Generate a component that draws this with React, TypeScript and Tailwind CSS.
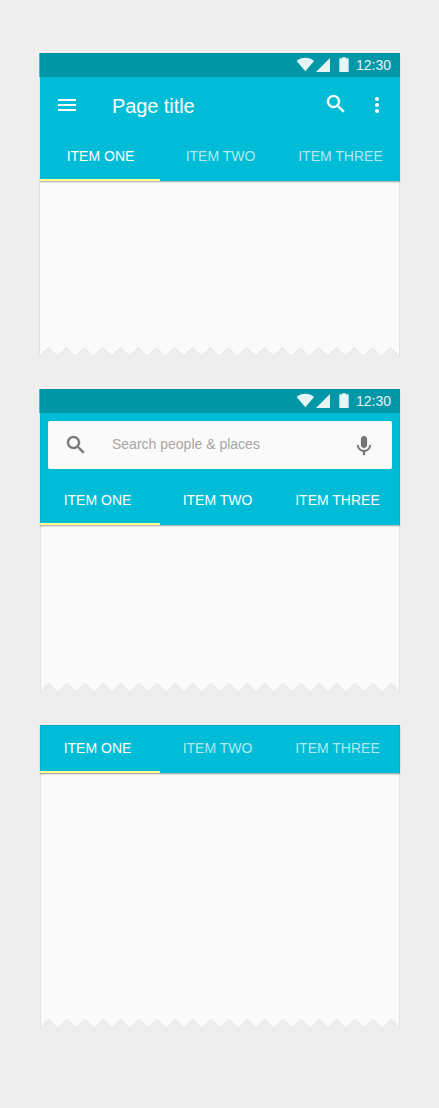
import type { ReactNode } from "react";

function Icon({ d, className, weight = 0 }: { d: string; className: string; weight?: number }) {
  return (
    <svg
      viewBox="0 0 24 24"
      className={`size-6 shrink-0 ${className}`}
      fill="currentColor"
      stroke="currentColor"
      strokeWidth={weight}
    >
      <path d={d} />
    </svg>
  );
}

const MENU = "M3 18h18v-2H3v2zm0-5h18v-2H3v2zm0-7v2h18V6H3z";
const SEARCH =
  "M15.5 14h-.79l-.28-.27C15.41 12.59 16 11.11 16 9.5 16 5.91 13.09 3 9.5 3S3 5.91 3 9.5 5.91 16 9.5 16c1.61 0 3.09-.59 4.23-1.57l.27.28v.79l5 4.99L20.49 19l-4.99-5zm-6 0C7.01 14 5 11.99 5 9.5S7.01 5 9.5 5 14 7.01 14 9.5 11.99 14 9.5 14z";
const MORE =
  "M12 8c1.1 0 2-.9 2-2s-.9-2-2-2-2 .9-2 2 .9 2 2 2zm0 2c-1.1 0-2 .9-2 2s.9 2 2 2 2-.9 2-2-.9-2-2-2zm0 6c-1.1 0-2 .9-2 2s.9 2 2 2 2-.9 2-2-.9-2-2-2z";
const MIC =
  "M12 14c1.66 0 2.99-1.34 2.99-3L15 5c0-1.66-1.34-3-3-3S9 3.34 9 5v6c0 1.66 1.34 3 3 3zm5.3-3c0 3-2.54 5.1-5.3 5.1S6.7 14 6.7 11H5c0 3.41 2.72 6.23 6 6.72V21h2v-3.28c3.28-.48 6-3.3 6-6.72h-1.7z";

function StatusBar() {
  return (
    <div className="-ml-px flex h-6 items-center justify-end bg-[#0097a7] pr-[9px] text-white/90 shadow-[inset_1px_0_0_rgba(255,255,255,0.3)]">
      <svg viewBox="0 0 54 16" className="mr-1.5 h-4 w-[54px]" fill="currentColor">
        <path d="M.7 3.9C3 1.9 6 .8 9.3.8S15.700 1.900 18 3.900L9.300 14.200z" />
        <path d="M34 1v14H20z" />
        <path d="M43.900 1.300H46V.3h4v1h2.100c.4 0 .6.200.6.600v12.500c0 .4-.2.600-.6.600h-8.200c-.4 0-.6-.2-.6-.6V1.900c0-.4.200-.6.600-.6z" />
      </svg>
      <span className="text-sm leading-6">12:30</span>
    </div>
  );
}

function Tabs({ muted = false, shifted = false }: { muted?: boolean; shifted?: boolean }) {
  return (
    <div className="grid h-12 grid-cols-3 text-center text-sm leading-[46px]">
      {["ITEM ONE", "ITEM TWO", "ITEM THREE"].map((label, i) => (
        <div
          key={label}
          className={`whitespace-nowrap ${shifted ? "pr-[5px]" : "pl-px"} ${
            i === 0 ? "border-b-2 border-[#ffff8d]" : muted ? "text-white/70" : ""
          }`}
        >
          {label}
        </div>
      ))}
    </div>
  );
}

function TornEdge({ right }: { right: number }) {
  const teeth = Array.from({ length: 20 }, (_, i) => {
    const tip = right - (i + 1) * 18;
    return `L${tip + 9} 1.5L${tip} 10.5`;
  }).join("");
  return (
    <svg viewBox="0 0 360 11" className="block h-[11px] w-[360px] overflow-visible">
      <path d={`M${right - 360} 0H${right}V10.5${teeth}Z`} fill="#fafafa" />
      <path d={`M${right} 10.5${teeth}`} fill="none" stroke="#e3e3e3" />
      <path d={`M359.5 0V10M${right < 360 ? -0.5 : 0.5} 0V10`} fill="none" stroke="#e3e3e3" />
    </svg>
  );
}

function Panel({ header, body, edge, right = 360 }: { header: ReactNode; body: string; edge: string; right?: number }) {
  return (
    <section className="w-[360px]">
      <header className={`relative bg-[#00bcd6] text-white ${edge}`}>{header}</header>
      <div className={`border-x border-[#e3e3e3] bg-[#fafafa] ${body}`} />
      <TornEdge right={right} />
    </section>
  );
}

export default function App() {
  return (
    <main className="flex h-[1108px] w-[439px] flex-col gap-8 bg-[#eeeeee] pt-[53px] pl-10 font-['Liberation_Sans',sans-serif]">
      <Panel
        body="h-[165px] -ml-px"
        edge="shadow-[0_1px_1px_rgba(0,0,0,0.2),0_2px_1px_rgba(0,0,0,0.06)]"
        right={359.5}
        header={
          <>
            <StatusBar />
            <div className="flex h-14 items-center pr-[11px] pl-[15px]">
              <Icon d={MENU} className="" />
              <h1 className="ml-[33px] grow pt-0.5 text-xl leading-6 tracking-[-0.08px]">Page title</h1>
              <Icon d={SEARCH} className="mr-[17.5px] mb-[1.5px]" weight={0.3} />
              <Icon d={MORE} className="" />
            </div>
            <Tabs muted />
          </>
        }
      />
      <Panel
        body="h-[157px]"
        edge="shadow-[inset_1px_0_0_rgba(0,0,0,0.06),inset_-1px_0_0_rgba(0,0,0,0.06),0_1px_1px_rgba(0,0,0,0.2),0_2px_1px_rgba(0,0,0,0.06)]"
        header={
          <>
            <StatusBar />
            <div className="p-2">
              <div className="flex h-12 items-center rounded-[2px] bg-[#fafafa] px-4 text-[#757575]">
                <Icon d={SEARCH} className="" weight={0.3} />
                <span className="ml-6 grow pb-0.5 text-sm leading-6 text-[#a6a6a6]">Search people &amp; places</span>
                <Icon d={MIC} className="mt-0.5" weight={0.2} />
              </div>
            </div>
            <Tabs shifted />
          </>
        }
      />
      <Panel
        body="h-[245px]"
        edge="shadow-[inset_1px_1px_0_rgba(0,0,0,0.07),inset_-1px_0_0_rgba(0,0,0,0.07),0_1px_1px_rgba(0,0,0,0.25),0_2px_1px_rgba(0,0,0,0.06)]"
        header={<Tabs muted shifted />}
      />
    </main>
  );
}
